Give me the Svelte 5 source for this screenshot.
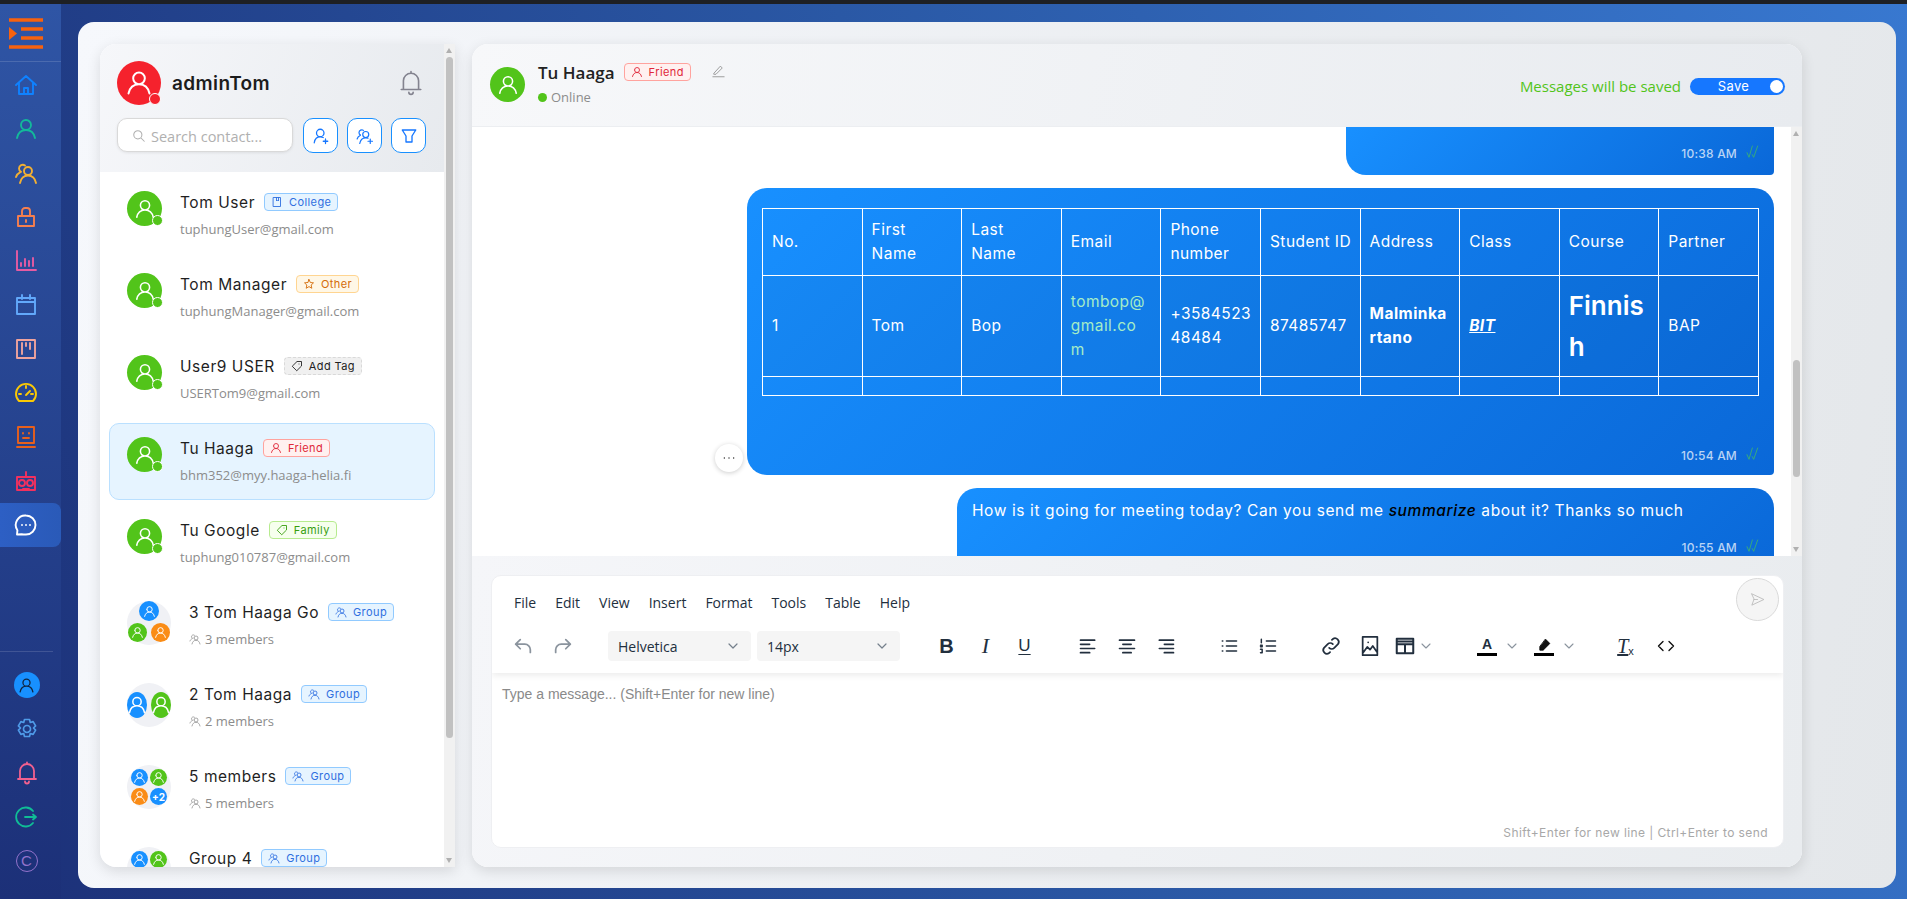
<script>
  const p = {
    home: 'M2 12 12 3l10 9M5 10v11h14V10M10 21v-6h4v6',
    user: 'M7 8a5 5 0 1 0 10 0a5 5 0 1 0-10 0M3 21c1-5 4.5-8 9-8s8 3 9 8',
    users: 'M10 10a4 4 0 1 0 8 0a4 4 0 1 0-8 0M6 22c.8-4.5 4-7.5 8-7.5s7.2 3 8 7.5M11 4.5A3.8 3.8 0 0 0 5 7.5c0 1.5.8 2.6 2 3.3M2 16c.6-2 2-3.6 4-4.6',
    lock: 'M4 11h16v10H4zM8 11V6a3 3 0 0 1 3-3h2a3 3 0 0 1 3 3v5M12 15v2',
    chart: 'M3 2v19h19M7 17v-3M11 17V10M15 17v-5M19 17V9',
    calendar: 'M3 5h18v16H3zM3 9h18M8 2v4M16 2v4',
    kanban: 'M3 3h18v18H3zM8 6v11M12 6v3M16 6v6',
    gauge: 'M5 20a10 10 0 1 1 14 0zM12 14l4-4M12 5v2M5 13h2M17 13h2',
    face: 'M4 2h16v16H4zM3 22h18M9 8v.5M15 8v.5M9 13h6',
    robot: 'M3 8h18v13H3zM12 3v5M5 14a3 3 0 1 0 6 0a3 3 0 1 0-6 0M13 14a3 3 0 1 0 6 0a3 3 0 1 0-6 0M9 20h6',
    chat: 'M12 2.5a9.5 9.5 0 1 1 0 19c-1.5 0-3-.1-4.5-.3L3 21.5l.4-4.2A9.5 9.5 0 0 1 12 2.5zM8 12h.01M12 12h.01M16 12h.01',
    gear: 'M9.5 2.5h5l.8 3 2.8-.9 2.5 4.3-2.1 2.1 2.1 2.1-2.5 4.3-2.8-.9-.8 3h-5l-.8-3-2.8.9-2.5-4.3 2.1-2.1-2.1-2.1 2.5-4.3 2.8.9zM12 8.5a3.5 3.5 0 1 0 0 7a3.5 3.5 0 1 0 0-7',
    bell: 'M5 18V10a7 7 0 0 1 14 0v8M3 18h18M10 20.5a2 2 0 0 0 4 0M12 3V1.5',
    logout: 'M18 6a9.5 9.5 0 1 0 0 12M10 12h11M18 9.5l3 2.5-3 2.5',
    search: 'M10 3a7 7 0 1 0 0 14a7 7 0 1 0 0-14M15 15l6 6',
    userAdd: 'M6 8a5 5 0 1 0 10 0a5 5 0 1 0-10 0M3 21c.8-5 3.5-8 8-8 1.5 0 2.8.3 4 1M18 16v6M15 19h6',
    usersAdd: 'M9 10a4 4 0 1 0 8 0a4 4 0 1 0-8 0M5 22c.8-4.5 3.5-7.5 8-7.5 1 0 2 .2 3 .5M10 4.5A3.8 3.8 0 0 0 4 7.5c0 1.5.8 2.6 2 3.3M1.5 16c.6-2 2-3.6 4-4.6M19 16v6M16 19h6',
    filter: 'M3 4h18l-5 8v8H8v-8z',
    star: 'M12 3l2.7 6 6.3.7-4.7 4.3 1.3 6.5L12 17.2 6.4 20.5l1.3-6.5L3 9.7 9.3 9z',
    tag: 'M3 12 12 3h9v9l-9 9zM16 8h.01',
    book: 'M5 3h14v18H5zM11 3v7l2-2 2 2V3',
    edit: 'M5 16 15 5l3 3L8 18H5zM3 22h18',
    undo: 'M9 5 4 10l5 5M4 10h10a6 6 0 0 1 6 6v3',
    redo: 'M15 5l5 5-5 5M20 10H10a6 6 0 0 0-6 6v3',
    chevron: 'M6 9l6 6 6-6',
    send: 'M4 4l17 8-17 8 3-8zM7 12h5',
    link: 'M10 14a4 4 0 0 0 5.6 0l4-4a4 4 0 0 0-5.6-5.6l-1 1M14 10a4 4 0 0 0-5.6 0l-4 4a4 4 0 0 0 5.6 5.6l1-1',
    image: 'M4 2h16v20H4zM4 20l5-7 3 3 3-4 5 7M10 8h.01',
    table: 'M3 4h18v16H3zM3 10h18M12 10v10M3 7h18',
    alignLeft: 'M3 5h17M3 10h11M3 15h17M3 20h11',
    alignCenter: 'M3 5h18M7 10h10M3 15h18M7 20h10',
    alignRight: 'M4 5h17M10 10h11M4 15h17M10 20h11',
    bullets: 'M9 6h12M9 12h12M9 18h12M4 6h.5M4 12h.5M4 18h.5',
    numbers: 'M10 6h11M10 12h11M10 18h11M4 4v4M3 11h2v2H3M3 16h2v4H3',
    check: 'M3 13l3 7 5-17M11 16l2 4 6-17',
    dots: 'M5 12h.01M12 12h.01M19 12h.01',
    code: 'M8 6l-6 6 6 6M16 6l6 6-6 6',
    pen: 'M14 4l5 5-8 8H7v-4z',
    menu: 'M2 3h34M14 12h22M14 21h22M2 30h34'
  }

  const navTop = [
    ['home', 'c-home'], ['user', 'c-user'], ['users', 'c-users'], ['lock', 'c-lock'], ['chart', 'c-chart'],
    ['calendar', 'c-cal'], ['kanban', 'c-kan'], ['gauge', 'c-gauge'], ['face', 'c-face'], ['robot', 'c-robot']
  ]

  const contacts = [
    { name: 'Tom User', mail: 'tuphungUser@gmail.com', tag: 'College', icon: 'book', cls: 'blue' },
    { name: 'Tom Manager', mail: 'tuphungManager@gmail.com', tag: 'Other', icon: 'star', cls: 'orange' },
    { name: 'User9 USER', mail: 'USERTom9@gmail.com', tag: 'Add Tag', icon: 'tag', cls: 'grey' },
    { name: 'Tu Haaga', mail: 'bhm352@myy.haaga-helia.fi', tag: 'Friend', icon: 'user', cls: 'red', active: true },
    { name: 'Tu Google', mail: 'tuphung010787@gmail.com', tag: 'Family', icon: 'tag', cls: 'green' }
  ]

  const groups = [
    { name: '3 Tom Haaga Go', count: 3, layout: 'three', members: ['b', 'g', 'o'] },
    { name: '2 Tom Haaga', count: 2, layout: 'two', members: ['b', 'g'] },
    { name: '5 members', count: 5, layout: 'four', members: ['b', 'g', 'o', 'plus'] },
    { name: 'Group 4', count: 4, layout: 'four', members: ['b', 'g', 'o', 'b'] }
  ]

  const heads = [['No.'], ['First', 'Name'], ['Last', 'Name'], ['Email'], ['Phone', 'number'], ['Student ID'], ['Address'], ['Class'], ['Course'], ['Partner']]
  const menus = ['File', 'Edit', 'View', 'Insert', 'Format', 'Tools', 'Table', 'Help']
</script>

{#snippet icon(name, size = 24, sw = 2)}
  <svg class="ic" width={size} height={size} viewBox="0 0 24 24" fill="none" stroke="currentColor" stroke-width={sw} stroke-linecap="round" stroke-linejoin="round"><path d={p[name]} /></svg>
{/snippet}

{#snippet checks()}
  <span class="time-check">{@render icon('check', 16, 1.3)}</span>
{/snippet}

<div class="page">
  <div class="topline"></div>
  <div class="shell">
    <nav class="nav">
      <div class="logo">
        <svg width="38" height="33" viewBox="0 0 38 33" fill="none" stroke="#f8620e" stroke-width="3.6"><path d={p.menu} /><path d="M2 10l8 6.5-8 6.5z" fill="#f8620e" stroke="none" /></svg>
      </div>
      <div class="nav-top">
        {#each navTop as [name, cls]}
          <span class="nav-item {cls}">{@render icon(name, 24, 1.9)}</span>
        {/each}
        <span class="nav-item nav-active">{@render icon('chat', 24, 1.9)}</span>
      </div>
      <div class="nav-bottom">
        <span class="me">{@render icon('user', 17, 1.8)}</span>
        <span class="nb c-gear">{@render icon('gear', 24, 1.7)}</span>
        <span class="nb c-bell">{@render icon('bell', 24, 1.8)}</span>
        <span class="nb c-out">{@render icon('logout', 24, 1.8)}</span>
        <span class="nb c-copy"><i>C</i></span>
      </div>
    </nav>

    <main class="main">
      <section class="contacts">
        <div class="contacts-body">
          <header class="me-head">
            <div class="me-row">
              <span class="avatar big red">{@render icon('user', 28, 1.7)}<b class="status"></b></span>
              <span class="me-name">adminTom</span>
              <span class="me-bell">{@render icon('bell', 26, 1.5)}</span>
            </div>
            <div class="tools-row">
              <label class="search">{@render icon('search', 14, 1.8)}<span>Search contact...</span></label>
              <span class="tool">{@render icon('userAdd', 18, 1.7)}</span>
              <span class="tool">{@render icon('usersAdd', 18, 1.6)}</span>
              <span class="tool">{@render icon('filter', 18, 1.8)}</span>
            </div>
          </header>

          <div class="list">
            {#each contacts as c}
              <div class="row" class:active={c.active}>
                <span class="avatar green">{@render icon('user', 22, 1.7)}<b class="status"></b></span>
                <div class="info">
                  <div class="name-line"><span class="name">{c.name}</span><span class="tag {c.cls}">{@render icon(c.icon, 12, 1.8)}{c.tag}</span></div>
                  <div class="mail">{c.mail}</div>
                </div>
              </div>
            {/each}
            {#each groups as g}
              <div class="row">
                <span class="group {g.layout}">
                  {#each g.members as m}
                    <span class="dot {m}">{#if m === 'plus'}+2{:else}{@render icon('user', g.layout === 'two' ? 20 : 13, 1.8)}{/if}</span>
                  {/each}
                </span>
                <div class="info">
                  <div class="name-line"><span class="name">{g.name}</span><span class="tag blue">{@render icon('users', 12, 1.7)}Group</span></div>
                  <div class="mail members">{@render icon('users', 12, 1.5)}{g.count} members</div>
                </div>
              </div>
            {/each}
          </div>
        </div>
        <div class="bar contacts-bar"><i class="thumb"></i></div>
      </section>

      <section class="chat">
        <header class="chat-head">
          <span class="avatar green">{@render icon('user', 22, 1.7)}</span>
          <div class="peer">
            <div class="peer-line">
              <span class="peer-name">Tu Haaga</span>
              <span class="tag red">{@render icon('user', 12, 1.8)}Friend</span>
              <span class="edit">{@render icon('edit', 15, 1.3)}</span>
            </div>
            <div class="online"><i></i>Online</div>
          </div>
          <div class="save-wrap">
            <span class="save-label">Messages will be saved</span>
            <span class="toggle">Save<i></i></span>
          </div>
        </header>

        <div class="chat-mid">
          <div class="messages">
            <div class="bubble first">
              <div class="time">10:38 AM {@render checks()}</div>
            </div>
            <div class="bubble table-bubble">
              <span class="more-btn">{@render icon('dots', 16, 2)}</span>
              <table>
                <thead>
                  <tr>
                    {#each heads as h}
                      <th>{#each h as line, i}{#if i}<br />{/if}{line}{/each}</th>
                    {/each}
                  </tr>
                </thead>
                <tbody>
                  <tr class="data">
                    <td>1</td>
                    <td>Tom</td>
                    <td>Bop</td>
                    <td class="mailcell">tombop@<br />gmail.co<br />m</td>
                    <td>+3584523<br />48484</td>
                    <td>87485747</td>
                    <td class="strong">Malminka<br />rtano</td>
                    <td class="bit"><u>BIT</u></td>
                    <td class="huge">Finnis<br />h</td>
                    <td>BAP</td>
                  </tr>
                  <tr class="empty">
                    {#each heads as _}<td></td>{/each}
                  </tr>
                </tbody>
              </table>
              <div class="time">10:54 AM {@render checks()}</div>
            </div>
            <div class="bubble last">
              <p>How is it going for meeting today? Can you send me <em>summarize</em> about it? Thanks so much</p>
              <div class="time">10:55 AM {@render checks()}</div>
            </div>
          </div>
          <div class="bar chat-bar"><i class="thumb"></i></div>
        </div>

        <div class="composer">
          <div class="editor">
            <div class="chrome">
              <div class="menubar">
                {#each menus as m}<span>{m}</span>{/each}
                <span class="send">{@render icon('send', 17, 1.2)}</span>
              </div>
              <div class="toolbar">
                <span class="tb grey-ic first-ic">{@render icon('undo', 22, 1.9)}</span>
                <span class="tb grey-ic">{@render icon('redo', 22, 1.9)}</span>
                <span class="select s1">Helvetica{@render icon('chevron', 16, 1.8)}</span>
                <span class="select">14px{@render icon('chevron', 16, 1.8)}</span>
                <span class="tb t-b">B</span>
                <span class="tb t-i">I</span>
                <span class="tb t-u">U</span>
                <span class="tb gap">{@render icon('alignLeft', 20, 2)}</span>
                <span class="tb">{@render icon('alignCenter', 20, 2)}</span>
                <span class="tb">{@render icon('alignRight', 20, 2)}</span>
                <span class="tb gap">{@render icon('bullets', 20, 2)}</span>
                <span class="tb">{@render icon('numbers', 20, 1.8)}</span>
                <span class="tb gap">{@render icon('link', 22, 1.9)}</span>
                <span class="tb">{@render icon('image', 22, 1.9)}</span>
                <span class="tb tb-table">{@render icon('table', 22, 2.2)}<em>{@render icon('chevron', 16, 1.6)}</em></span>
                <span class="tb tb-color gap2"><span class="t-a">A</span><em>{@render icon('chevron', 16, 1.6)}</em></span>
                <span class="tb tb-color"><span class="t-h">{@render icon('pen', 20, 1)}</span><em>{@render icon('chevron', 16, 1.6)}</em></span>
                <span class="tb t-x"><i>T</i><small>x</small></span>
                <span class="tb t-code">{@render icon('code', 18, 1.8)}</span>
              </div>
            </div>
            <div class="input">
              <span class="placeholder">Type a message... (Shift+Enter for new line)</span>
              <span class="hint">Shift+Enter for new line | Ctrl+Enter to send</span>
            </div>
          </div>
        </div>
      </section>
    </main>
  </div>
</div>

<style>
  :global(body) {
    margin: 0;
    font-family: Inter, 'Noto Sans', sans-serif;
    overflow: hidden;
  }

  .page {
    width: 1907px;
    height: 899px;
    overflow: hidden;
    background: linear-gradient(70deg, #1c3078 0%, #2a58a5 52%, #3878d0 100%);
    display: flex;
    flex-direction: column;
  }

  .topline {
    height: 4px;
    background: #1e2024;
  }

  .shell {
    flex: 1;
    display: flex;
    min-height: 0;
  }

  .ic {
    display: block;
    flex: none;
  }

  /* left rail */
  .nav {
    width: 61px;
    flex: none;
    display: flex;
    flex-direction: column;
    background: linear-gradient(180deg, #2f55a5, #1c3078);
  }

  .logo {
    height: 58px;
    border-bottom: 1px solid rgba(255, 255, 255, 0.14);
    padding: 13px 0 0 7px;
    box-sizing: border-box;
    flex: none;
  }

  .nav-top {
    display: flex;
    flex-direction: column;
    padding-top: 1px;
    height: 589px;
    box-sizing: border-box;
    flex: none;
  }

  .nav-item {
    height: 44px;
    display: flex;
    align-items: center;
    justify-content: center;
    flex: none;
    padding-right: 9px;
  }

  .nav-active {
    color: #fff;
    background: linear-gradient(90deg, #2d5fc4, #2a5ab8);
    border-radius: 0 8px 8px 0;
  }

  .c-home { color: #0f82ff; }
  .c-user { color: #13b99a; }
  .c-users { color: #f2b033; }
  .c-lock { color: #f67f4e; }
  .c-chart { color: #e65ba2; }
  .c-cal { color: #62a9fb; }
  .c-kan { color: #efa39d; }
  .c-gauge { color: #fbc904; }
  .c-face { color: #e8601c; }
  .c-robot { color: #f3305e; }

  .nav-bottom {
    width: 53px;
    border-top: 1px solid rgba(255, 255, 255, 0.14);
    display: flex;
    flex-direction: column;
    align-items: center;
    padding-top: 20px;
    gap: 18px;
  }

  .me {
    width: 26px;
    height: 26px;
    border-radius: 50%;
    background: #1890ff;
    color: #10243f;
    display: flex;
    align-items: center;
    justify-content: center;
  }

  .nb {
    height: 26px;
    width: 26px;
    display: flex;
    align-items: center;
    justify-content: center;
  }

  .c-gear { color: #4f9be8; }
  .c-bell { color: #f2608f; }
  .c-out { color: #10bd96; }

  .c-copy i {
    width: 20px;
    height: 20px;
    border: 1.5px solid #9272cb;
    border-radius: 50%;
    color: #9272cb;
    font: normal 15px/20px 'Liberation Sans', sans-serif;
    text-align: center;
    flex: none;
  }

  /* main sheet */
  .main {
    margin: 18px 11px 11px 17px;
    flex: 1;
    min-width: 0;
    display: flex;
    gap: 17px;
    padding: 22px 94px 21px 22px;
    border-radius: 16px;
    background: linear-gradient(100deg, #f6f8fc, #e4e7ea);
  }

  .contacts {
    width: 355px;
    flex: none;
    display: flex;
    border-radius: 16px 0 0 16px;
    overflow: hidden;
    box-shadow: 0 4px 14px rgba(0, 0, 0, 0.12);
  }

  .contacts-body {
    width: 344px;
    background: #fff;
    overflow: hidden;
  }

  .me-head {
    height: 128px;
    box-sizing: border-box;
    padding: 17px 18px 0 17px;
    background: linear-gradient(110deg, #f6f7fa, #e7eaee);
  }

  .me-row {
    display: flex;
    align-items: center;
    height: 44px;
    gap: 11px;
  }

  .me-name {
    font-size: 19px;
    font-weight: 600;
    letter-spacing: 0.4px;
    color: #1c1c1c;
    flex: 1;
  }

  .me-bell {
    color: #83838f;
    margin-right: 2px;
  }

  .tools-row {
    display: flex;
    margin-top: 13px;
    gap: 9px;
  }

  .search {
    width: 176px;
    height: 34px;
    box-sizing: border-box;
    border: 1px solid #d9d9d9;
    border-radius: 10px;
    background: #fff;
    box-shadow: 0 1px 3px rgba(0, 0, 0, 0.08);
    display: flex;
    align-items: center;
    gap: 5px;
    padding: 2px 0 0 14px;
    color: #b0b0b0;
    font-family: 'Open Sans', sans-serif;
    font-size: 14.5px;
    margin-right: 1px;
  }

  .tool {
    width: 35px;
    height: 35px;
    box-sizing: border-box;
    border: 1px solid #1890ff;
    border-radius: 10px;
    background: #fff;
    color: #1677ff;
    display: flex;
    align-items: center;
    justify-content: center;
  }

  .list {
    padding-top: 5px;
  }

  .row {
    height: 77px;
    box-sizing: border-box;
    margin: 0 9px 5px 9px;
    padding: 13px 0 0 17px;
    display: flex;
    gap: 18px;
    border: 1px solid transparent;
    border-radius: 10px;
  }

  .row.active {
    background: #e6f4ff;
    border-color: #bae0ff;
  }

  .avatar {
    width: 35px;
    height: 35px;
    border-radius: 50%;
    color: #fff;
    display: flex;
    align-items: center;
    justify-content: center;
    position: relative;
    flex: none;
  }

  .avatar.big {
    width: 44px;
    height: 44px;
  }

  .avatar.green { background: #52c41a; }
  .avatar.red { background: #f5222d; }

  .status {
    position: absolute;
    right: -1px;
    bottom: 0;
    width: 9px;
    height: 9px;
    background: #52c41a;
    border: 1px solid #fff;
    border-radius: 50%;
  }

  .avatar.big .status {
    width: 10px;
    height: 10px;
    background: #f5222d;
    right: 0;
    bottom: 0;
  }

  .info {
    margin-top: -1px;
    min-width: 0;
  }

  .name-line {
    display: flex;
    align-items: center;
    height: 24px;
    gap: 9px;
    white-space: nowrap;
  }

  .name {
    font-size: 15.5px;
    letter-spacing: 0.55px;
    color: #1f1f1f;
  }

  .tag {
    height: 18px;
    box-sizing: border-box;
    display: inline-flex;
    align-items: center;
    gap: 6px;
    padding: 0 6px;
    border-radius: 4px;
    border: 1px solid;
    font-size: 11px;
    letter-spacing: 0.4px;
    white-space: nowrap;
  }

  .tag.blue { color: #2f6fe0; background: #e6f4ff; border-color: #91caff; }
  .tag.orange { color: #d46b08; background: #fff7e6; border-color: #ffd591; }
  .tag.grey { color: #222; background: #f0f0f0; border: 1px dashed #d9d9d9; }
  .tag.red { color: #e0283a; background: #fff1f0; border-color: #ffa39e; }
  .tag.green { color: #389e0d; background: #f6ffed; border-color: #b7eb8f; }

  .mail {
    margin-top: 6px;
    font-family: 'Open Sans', sans-serif;
    font-size: 13px;
    line-height: 18px;
    color: #8c8c8c;
    white-space: nowrap;
  }

  .members {
    display: flex;
    align-items: center;
    gap: 4px;
  }

  .group {
    width: 44px;
    height: 44px;
    border-radius: 50%;
    background: #f0f1f5;
    flex: none;
    display: flex;
    flex-wrap: wrap;
    align-items: center;
    justify-content: center;
    gap: 2px;
    margin-right: 0;
  }

  .dot {
    border-radius: 50%;
    color: #fff;
    display: flex;
    align-items: center;
    justify-content: center;
    font-size: 10px;
    font-weight: 700;
  }

  .dot.b, .dot.plus { background: #1890ff; }
  .dot.g { background: #52c41a; }
  .dot.o { background: #fa8c16; }

  .three { gap: 2px 4px; align-content: flex-start; }
  .three .dot { width: 19px; height: 19px; }
  .three .dot.b { width: 20px; height: 20px; margin: 0 12px; }

  .two { gap: 4px; }
  .two .dot { width: 20px; height: 26px; }

  .four { gap: 2px; align-content: center; }
  .four .dot { width: 17px; height: 17px; }

  /* fake scrollbars */
  .bar {
    width: 11px;
    flex: none;
    background: #f1f1f1;
    position: relative;
  }

  .bar::before,
  .bar::after {
    content: '';
    position: absolute;
    left: 2px;
    border-left: 3.5px solid transparent;
    border-right: 3.5px solid transparent;
  }

  .bar::before {
    top: 4px;
    border-bottom: 5px solid #b0b0b0;
  }

  .bar::after {
    bottom: 4px;
    border-top: 5px solid #b0b0b0;
  }

  .thumb {
    position: absolute;
    left: 2px;
    width: 7px;
    background: #c1c1c1;
    border-radius: 4px;
  }

  .contacts-bar .thumb { top: 13px; height: 681px; }
  .chat-bar .thumb { top: 233px; height: 117px; }

  /* chat */
  .chat {
    width: 1330px;
    flex: none;
    display: flex;
    flex-direction: column;
    border-radius: 16px;
    overflow: hidden;
    background: #fff;
    box-shadow: 0 4px 14px rgba(0, 0, 0, 0.12);
  }

  .chat-head {
    height: 83px;
    box-sizing: border-box;
    flex: none;
    padding: 23px 17px 0 18px;
    display: flex;
    align-items: flex-start;
    background: linear-gradient(100deg, #f7f8fa, #e8ebef);
    border-bottom: 1px solid #eceef1;
  }

  .peer {
    margin-left: 13px;
    flex: 1;
    margin-top: -7px;
  }

  .peer-line {
    display: flex;
    align-items: center;
    gap: 9px;
    height: 24px;
  }

  .peer-name {
    font-family: 'Open Sans', sans-serif;
    font-size: 17px;
    font-weight: 600;
    color: #222;
  }

  .edit {
    color: #8a8a8a;
    margin-left: 11px;
    margin-top: -3px;
  }

  .online {
    display: flex;
    align-items: center;
    gap: 4px;
    font-family: 'Open Sans', sans-serif;
    font-size: 13px;
    color: #8c8c8c;
    margin-top: 4px;
  }

  .online i {
    width: 9px;
    height: 9px;
    border-radius: 50%;
    background: #52c41a;
  }

  .save-wrap {
    display: flex;
    align-items: center;
    gap: 9px;
    margin-top: 9px;
  }

  .save-label {
    font-family: 'Open Sans', sans-serif;
    font-size: 15px;
    color: #52c41a;
  }

  .toggle {
    width: 95px;
    height: 17px;
    border-radius: 9px;
    background: #1677ff;
    color: #fff;
    font-size: 13px;
    letter-spacing: 0.4px;
    line-height: 16px;
    text-align: center;
    position: relative;
    box-sizing: border-box;
    padding-right: 8px;
  }

  .toggle i {
    position: absolute;
    right: 2px;
    top: 2px;
    width: 13px;
    height: 13px;
    border-radius: 50%;
    background: #fff;
  }

  .chat-mid {
    height: 429px;
    flex: none;
    display: flex;
    background: #fff;
    overflow: hidden;
  }

  .messages {
    flex: 1;
    min-width: 0;
    overflow: hidden;
    display: flex;
    flex-direction: column;
    align-items: flex-end;
    padding-right: 17px;
    gap: 13px;
  }

  .bubble {
    box-sizing: border-box;
    flex: none;
    color: #fff;
    border-radius: 20px 20px 4px 20px;
    background: linear-gradient(135deg, #1890ff, #0a68d8);
    position: relative;
    font-size: 15.5px;
    letter-spacing: 0.6px;
  }

  .bubble.first {
    width: 428px;
    height: 48px;
    border-radius: 0 0 4px 20px;
  }

  .table-bubble {
    width: 1027px;
    height: 287px;
    padding: 20px 15px 0;
  }

  .bubble.last {
    width: 817px;
    height: 90px;
    padding: 11px 15px 0;
  }

  .bubble.last p {
    margin: 0;
    line-height: 24px;
  }

  .bubble em {
    color: #000;
    font-weight: 500;
  }

  .time {
    position: absolute;
    right: 13px;
    display: flex;
    align-items: center;
    gap: 8px;
    font-size: 12px;
    letter-spacing: 0.2px;
    font-weight: 500;
    color: rgba(255, 255, 255, 0.72);
  }

  .first .time { top: 19px; }
  .table-bubble .time { bottom: 12px; }
  .last .time { top: 52px; }

  .time-check {
    color: #3cb371;
    margin-top: -4px;
  }

  .more-btn {
    position: absolute;
    left: -32px;
    bottom: 3px;
    width: 28px;
    height: 28px;
    border-radius: 50%;
    background: #fff;
    color: #222;
    box-shadow: 0 1px 5px rgba(0, 0, 0, 0.2);
    display: flex;
    align-items: center;
    justify-content: center;
  }

  table {
    width: 997px;
    table-layout: fixed;
    border-collapse: collapse;
  }

  th,
  td {
    border: 1px solid #fff;
    padding: 0 9px;
    font-size: 15.5px;
    letter-spacing: 0.45px;
    font-weight: 400;
    line-height: 24px;
    text-align: left;
    vertical-align: middle;
    white-space: nowrap;
    overflow: hidden;
  }

  th { height: 66px; }
  tbody td { height: 100px; }
  tr.empty td { height: 18px; }
  tr.data td { background: rgba(0, 0, 0, 0.03); }

  .mailcell { color: #a5ecc6; }
  .strong { font-weight: 700; }

  .bit {
    font-weight: 700;
    font-style: italic;
  }

  .huge {
    font-size: 26px;
    letter-spacing: 0;
    font-weight: 600;
    line-height: 41px;
  }

  /* composer */
  .composer {
    flex: 1;
    min-height: 0;
    padding: 19px 18px 19px 19px;
    background: linear-gradient(100deg, #f5f6f9, #e9ecef);
  }

  .editor {
    height: 100%;
    box-sizing: border-box;
    background: #fff;
    border: 1px solid #eeeff2;
    border-radius: 10px;
    display: flex;
    flex-direction: column;
    overflow: hidden;
  }

  .chrome {
    height: 97px;
    flex: none;
    box-shadow: 0 3px 6px rgba(0, 0, 0, 0.07);
    position: relative;
  }

  .menubar {
    display: flex;
    height: 52px;
    padding: 0 0 0 22px;
    box-sizing: border-box;
    align-items: center;
    gap: 19px;
    font-family: 'Open Sans', sans-serif;
    font-size: 14px;
    color: #222f3e;
  }

  .send {
    position: absolute;
    right: 4px;
    top: 2px;
    width: 43px;
    height: 43px;
    box-sizing: border-box;
    border-radius: 50%;
    background: #f5f5f5;
    border: 1px solid #d9d9d9;
    color: #b8b8b8;
    display: flex;
    align-items: center;
    justify-content: center;
  }

  .toolbar {
    display: flex;
    align-items: center;
    height: 32px;
    margin-top: 2px;
    padding-left: 11px;
    color: #222f3e;
  }

  .tb {
    width: 39px;
    height: 30px;
    flex: none;
    display: flex;
    align-items: center;
    justify-content: center;
    font-family: 'Liberation Sans', sans-serif;
  }

  .grey-ic { color: #8b949e; }
  .first-ic { width: 40px; }

  .select {
    width: 143px;
    height: 30px;
    box-sizing: border-box;
    display: flex;
    align-items: center;
    justify-content: space-between;
    padding: 0 10px 0 10px;
    background: #f5f5f5;
    border-radius: 4px;
    font-family: 'Open Sans', sans-serif;
    font-size: 14px;
    color: #222f3e;
    flex: none;
  }

  .select .ic { color: #75808c; }
  .select.s1 { margin: 0 6px 0 26px; }
  .select + .tb { margin-left: 27px; }

  .t-b { font-size: 20px; font-weight: 700; }
  .t-i { font-family: 'Liberation Serif', serif; font-size: 22px; font-style: italic; }
  .t-u { font-size: 17px; text-decoration: underline; text-underline-offset: 3px; }
  .gap { margin-left: 24px; }
  .gap2 { margin-left: 31px; }

  .tb-table { width: 50px; gap: 2px; }
  .tb em { color: #8b949e; display: block; }
  .tb-color { width: 57px; gap: 7px; }

  .t-a {
    font-size: 14px;
    font-weight: 700;
    width: 20px;
    height: 20px;
    line-height: 17px;
    text-align: center;
    border-bottom: 3px solid #000;
    box-sizing: border-box;
    color: #222f3e;
  }

  .t-h {
    height: 20px;
    width: 20px;
    border-bottom: 3px solid #000;
    box-sizing: border-box;
    overflow: hidden;
    color: #000;
  }

  .t-h :global(path) { fill: #111; }

  .t-x {
    margin-left: 22px;
    font-family: 'Liberation Serif', serif;
    font-size: 20px;
  }

  .t-x i { text-decoration: underline; }
  .t-x small { font-size: 11px; margin-top: 9px; font-family: 'Liberation Sans', sans-serif; }
  .t-code { width: 46px; color: #111; margin-left: -2px; }

  .input {
    flex: 1;
    position: relative;
    padding: 10px;
  }

  .placeholder {
    font-family: 'Liberation Sans', sans-serif;
    font-size: 14px;
    color: #8a8a8a;
  }

  .hint {
    position: absolute;
    right: 15px;
    bottom: 7px;
    font-size: 12px;
    letter-spacing: 0.4px;
    color: #a8a8a8;
  }
</style>
